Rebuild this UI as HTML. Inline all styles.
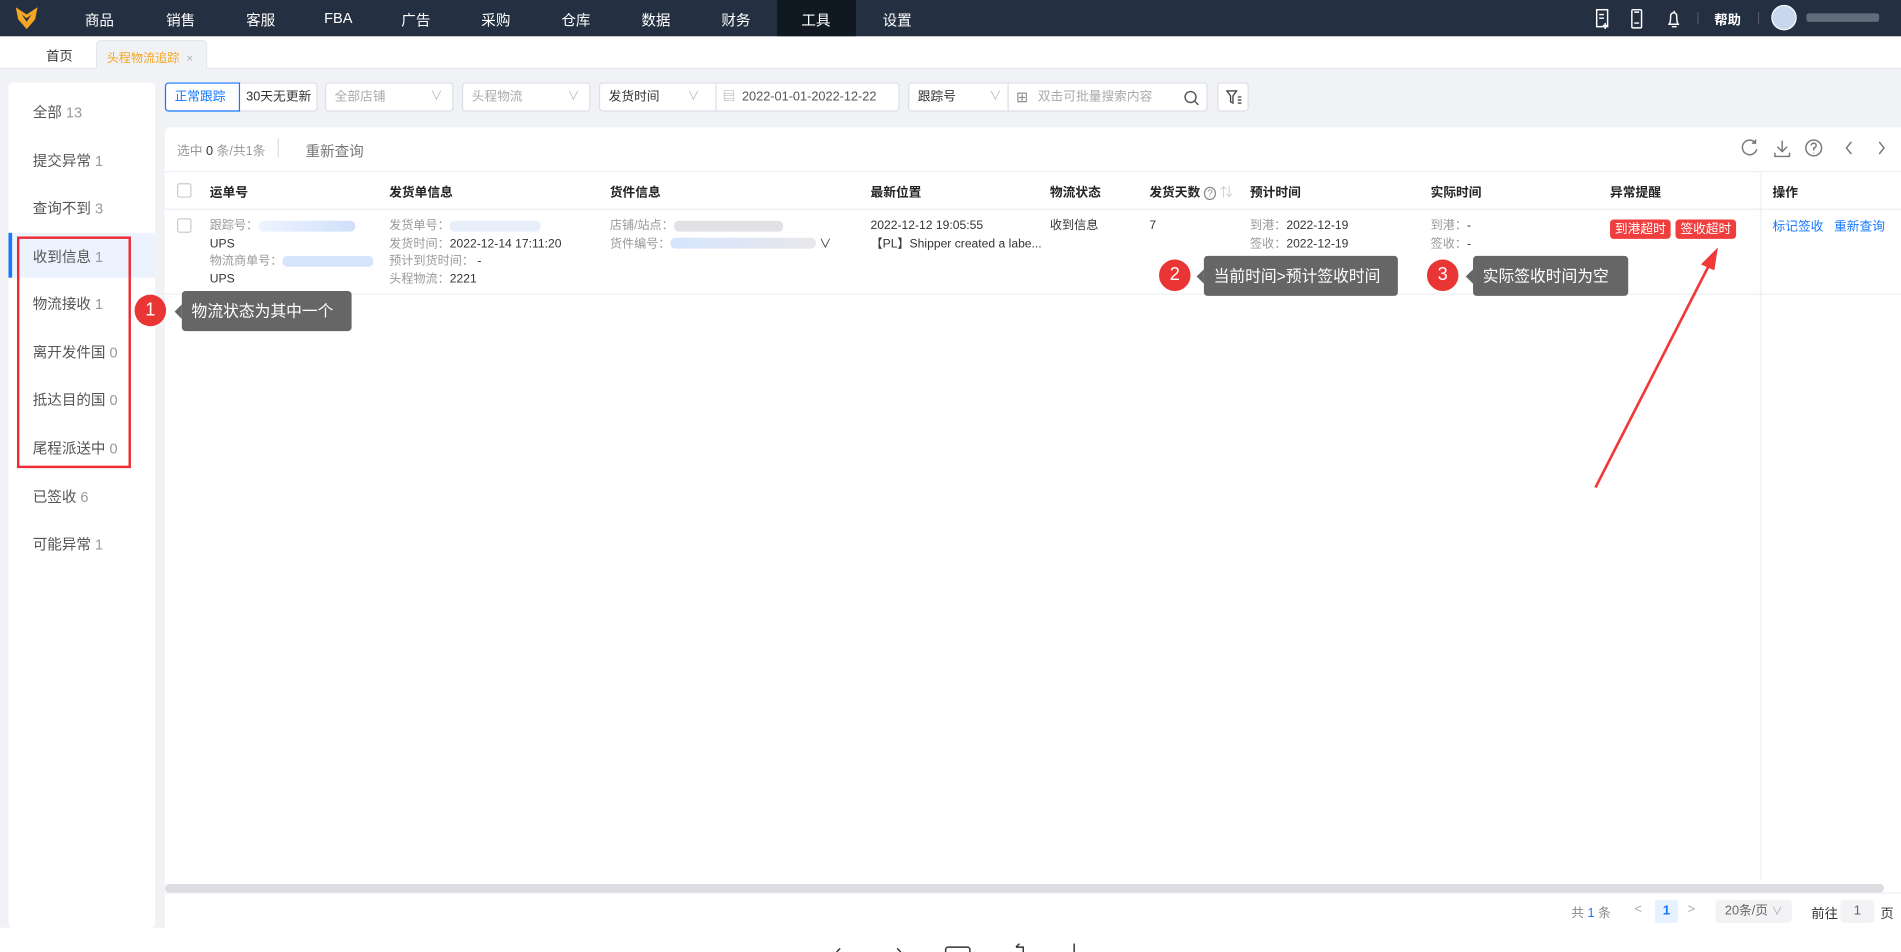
<!DOCTYPE html>
<html><head><meta charset="utf-8">
<style>
html,body{margin:0;padding:0;width:1901px;height:952px;overflow:hidden;background:#fff;}
#s{position:absolute;left:0;top:0;width:1568px;height:785px;transform:scale(1.21237,1.2127);transform-origin:0 0;font-family:"Liberation Sans","Noto Sans CJK SC",sans-serif;font-size:11px;color:#333;}
.a{position:absolute;white-space:nowrap;}
.nav{left:0;top:0;width:1568px;height:30px;background:#243041;}
.nv{top:8px;color:#fff;font-size:12px;transform:translateX(-50%);}
.sel{position:absolute;top:68px;height:24px;border:1px solid #dcdfe6;border-radius:3px;background:#fff;box-sizing:border-box;color:#aaa;line-height:22px;padding-left:7px;font-size:10.5px;}
.chev{position:absolute;right:8px;top:0;color:#bbb;font-size:10px;}
.si{left:27px;font-size:12px;color:#555;}
.si span{color:#999;}
.g{color:#999;}
.blur{display:inline-block;height:9px;border-radius:4px;vertical-align:middle;}
.tip{background:#666;color:#fff;font-size:13px;border-radius:3px;line-height:33px;padding-left:8px;box-sizing:border-box;height:33px;}
.tip:before{content:"";position:absolute;left:-6px;top:11px;border:6px solid transparent;border-left:0;border-right-color:#666;}
.num{width:26px;height:26px;border-radius:50%;background:#ea3535;color:#fff;font-size:15px;text-align:center;line-height:26px;}
.tag{background:#f03d3d;color:#fff;border-radius:3px;font-size:10.5px;line-height:16px;padding:0 4px;}
.h{font-weight:bold;color:#222;top:151px;font-size:10.5px;}
.r{font-size:10px;line-height:14.5px;top:180px;}
</style></head><body><div id="s">
<div class="a nav"></div>
<svg class="a" style="left:11px;top:4px" width="22" height="22" viewBox="0 0 22 22"><path d="M2 2 L11 8 L20 2 L18 12 L11 20 L4 12 Z" fill="#f5a623"/><path d="M7 8 L11 14 L15 8 L11 11Z" fill="#243041"/></svg>
<div class="a" style="left:641px;top:0;width:65px;height:30px;background:#101822"></div>
<div class="a nv" style="left:82px">商品</div><div class="a nv" style="left:149px">销售</div><div class="a nv" style="left:215px">客服</div><div class="a nv" style="left:279px">FBA</div><div class="a nv" style="left:343px">广告</div><div class="a nv" style="left:409px">采购</div><div class="a nv" style="left:475px">仓库</div><div class="a nv" style="left:541px">数据</div><div class="a nv" style="left:607px">财务</div><div class="a nv" style="left:673px">工具</div><div class="a nv" style="left:740px">设置</div>
<svg class="a" style="left:1315px;top:7px" width="80" height="17" viewBox="0 0 80 17" fill="none" stroke="#fff" stroke-width="1.2"><rect x="2" y="1" width="9" height="14"/><path d="M4 5h4M4 8h4M9 12v5M7 14h4"/><rect x="31" y="1" width="8" height="15" rx="1"/><path d="M33 3h4M33 12h4"/><path d="M61 13h9M62 13c1-2 1-4 1-7a2.5 2.5 0 0 1 5 0c0 3 0 5 1 7M66 2v1M64 15h4"/></svg>
<div class="a" style="left:1400px;top:10px;width:1px;height:10px;background:#556"></div>
<div class="a" style="left:1414px;top:8px;color:#fff;font-size:11px;font-weight:bold">帮助</div>
<div class="a" style="left:1450px;top:10px;width:1px;height:10px;background:#556"></div>
<div class="a" style="left:1461px;top:4px;width:21px;height:21px;border-radius:50%;background:#c8d7ee;border:1px solid #fff;box-sizing:border-box"></div>
<div class="a" style="left:1490px;top:11px;width:60px;height:7px;background:#8a92a0;opacity:.6;border-radius:2px"></div>
<div class="a" style="left:0;top:30px;width:1568px;height:27px;background:#fff;border-bottom:1px solid #e4e6ea;box-sizing:border-box"></div>
<div class="a" style="left:38px;top:38px;font-size:11px;color:#333">首页</div>
<div class="a" style="left:79px;top:33px;width:92px;height:24px;background:#f0f2f5;border:1px solid #e4e6ea;border-bottom:0;border-radius:4px 4px 0 0;box-sizing:border-box"></div>
<div class="a" style="left:88px;top:39px;font-size:10px;color:#f5a623">头程物流追踪 <span style="color:#aaa;font-size:9px;margin-left:3px">×</span></div>
<div class="a" style="left:0;top:57px;width:1568px;height:708px;background:#f0f2f5"></div>
<div class="a" style="left:7px;top:68px;width:121px;height:697px;background:#fff;border-radius:4px"></div>
<div class="a" style="left:7px;top:192px;width:121px;height:37px;background:#ecf3fe"></div>
<div class="a" style="left:7px;top:192px;width:3px;height:37px;background:#1677ff"></div>
<div class="a si" style="top:84px">全部 <span>13</span></div>
<div class="a si" style="top:124px">提交异常 <span>1</span></div>
<div class="a si" style="top:163px">查询不到 <span>3</span></div>
<div class="a si" style="top:203px">收到信息 <span>1</span></div>
<div class="a si" style="top:242px">物流接收 <span>1</span></div>
<div class="a si" style="top:282px">离开发件国 <span>0</span></div>
<div class="a si" style="top:321px">抵达目的国 <span>0</span></div>
<div class="a si" style="top:361px">尾程派送中 <span>0</span></div>
<div class="a si" style="top:401px">已签收 <span>6</span></div>
<div class="a si" style="top:440px">可能异常 <span>1</span></div>
<div class="a" style="left:14px;top:195px;width:94px;height:191px;border:2px solid #ee2b33;box-sizing:border-box"></div>
<div class="sel" style="left:136px;width:62px;border-color:#1677ff;color:#1677ff;border-radius:3px 0 0 3px;z-index:2">正常跟踪</div>
<div class="sel" style="left:197px;width:65px;color:#333;border-radius:0 3px 3px 0;padding-left:5px">30天无更新</div>
<div class="sel" style="left:268px;width:106px">全部店铺<span class="chev">∨</span></div>
<div class="sel" style="left:381px;width:106px">头程物流<span class="chev">∨</span></div>
<div class="sel" style="left:494px;width:248px;color:#333">发货时间<span style="position:absolute;left:72px;color:#bbb;font-size:10px">∨</span><span style="position:absolute;left:95px;top:0;width:1px;height:22px;background:#dcdfe6"></span><span style="position:absolute;left:101px;color:#aaa">▤</span><span style="position:absolute;left:117px;color:#555">2022-01-01-2022-12-22</span></div>
<div class="sel" style="left:749px;width:247px;color:#333">跟踪号<span style="position:absolute;left:66px;color:#bbb;font-size:10px">∨</span><span style="position:absolute;left:81px;top:0;width:1px;height:22px;background:#dcdfe6"></span><span style="position:absolute;left:88px;color:#888;font-size:12px">⊞</span><span style="position:absolute;left:106px;color:#aaa">双击可批量搜索内容</span>
<svg style="position:absolute;left:226px;top:5px" width="13" height="13" viewBox="0 0 13 13" fill="none" stroke="#555" stroke-width="1.2"><circle cx="6" cy="6" r="4.5"/><path d="M9.5 9.5l3 3"/></svg></div>
<div class="sel" style="left:1004px;width:26px;padding:0"><svg style="position:absolute;left:6px;top:5px" width="13" height="13" viewBox="0 0 13 13" fill="none" stroke="#444" stroke-width="1.1"><path d="M1 1h8l-3 4v6l-2-1V5z M10 6h3M10 8.5h3M10 11h3"/></svg></div>
<div class="a" style="left:136px;top:105px;width:1432px;height:660px;background:#fff;border-radius:4px 0 0 0"></div>
<div class="a g" style="left:146px;top:117px;font-size:10.5px">选中 <b style="color:#333;font-weight:normal">0</b> 条/共1条</div>
<div class="a" style="left:229px;top:114px;width:1px;height:16px;background:#ddd"></div>
<div class="a" style="left:252px;top:116px;font-size:12px;color:#777">重新查询</div>
<svg class="a" style="left:1436px;top:114px" width="125" height="16" viewBox="0 0 125 16" fill="none" stroke="#777" stroke-width="1.2"><path d="M12 4A6 6 0 1 0 13 9M12 1v3h-3"/><path d="M34 2v9M30 7l4 4 4-4M28 12v3h12v-3"/><circle cx="60" cy="8" r="6.5"/><path d="M58 6a2 2 0 1 1 2 2v2M60 12v.5"/><path d="M91 3l-4 5 4 5M114 3l4 5-4 5"/></svg>
<div class="a" style="left:136px;top:141px;width:1432px;height:1px;background:#ebeef2"></div>
<div class="a" style="left:136px;top:172px;width:1432px;height:1px;background:#ebeef2"></div>
<div class="a" style="left:136px;top:242px;width:1432px;height:1px;background:#ebeef2"></div>
<div class="a" style="left:1452px;top:141px;width:1px;height:584px;background:#ebeef2;box-shadow:-3px 0 6px rgba(0,0,0,.06)"></div>
<div class="a" style="left:146px;top:151px;width:10px;height:10px;border:1px solid #ccc;border-radius:2px"></div>
<div class="a" style="left:146px;top:180px;width:10px;height:10px;border:1px solid #ccc;border-radius:2px"></div>
<div class="a h" style="left:173px">运单号</div>
<div class="a h" style="left:321px">发货单信息</div>
<div class="a h" style="left:503px">货件信息</div>
<div class="a h" style="left:718px">最新位置</div>
<div class="a h" style="left:866px">物流状态</div>
<div class="a h" style="left:948px">发货天数 <span style="font-weight:normal;color:#888;border:1px solid #888;border-radius:50%;font-size:8px;padding:0 2px">?</span> <span style="color:#ccc;font-weight:normal">⇅</span></div>
<div class="a h" style="left:1031px">预计时间</div>
<div class="a h" style="left:1180px">实际时间</div>
<div class="a h" style="left:1328px">异常提醒</div>
<div class="a h" style="left:1462px">操作</div>
<div class="a r" style="left:173px"><span class="g">跟踪号：</span><span class="blur" style="width:80px;background:linear-gradient(90deg,#eef4ff,#cfe0fb)"></span><br>UPS<br><span class="g">物流商单号：</span><span class="blur" style="width:75px;background:#d6e5fc"></span><br>UPS</div>
<div class="a r" style="left:321px"><span class="g">发货单号：</span><span class="blur" style="width:75px;background:#e8eefa"></span><br><span class="g">发货时间：</span>2022-12-14 17:11:20<br><span class="g">预计到货时间：</span> -<br><span class="g">头程物流：</span>2221</div>
<div class="a r" style="left:503px"><span class="g">店铺/站点：</span><span class="blur" style="width:90px;background:#e2e2e6"></span><br><span class="g">货件编号：</span><span class="blur" style="width:120px;background:linear-gradient(90deg,#d6e5fc,#e8e8ec)"></span> ∨</div>
<div class="a r" style="left:718px">2022-12-12 19:05:55<br>【PL】Shipper created a labe...</div>
<div class="a r" style="left:866px">收到信息</div>
<div class="a r" style="left:948px">7</div>
<div class="a r" style="left:1031px"><span class="g">到港：</span>2022-12-19<br><span class="g">签收：</span>2022-12-19</div>
<div class="a r" style="left:1180px"><span class="g">到港：</span>-<br><span class="g">签收：</span>-</div>
<div class="a tag" style="left:1328px;top:181px">到港超时</div>
<div class="a tag" style="left:1382px;top:181px">签收超时</div>
<div class="a" style="left:1462px;top:179px;color:#1677ff;font-size:10.5px">标记签收 &nbsp; 重新查询</div>
<div class="a num" style="left:111px;top:243px">1</div>
<div class="a tip" style="left:150px;top:240px;width:140px">物流状态为其中一个</div>
<div class="a num" style="left:956px;top:214px">2</div>
<div class="a tip" style="left:993px;top:211px;width:160px">当前时间&gt;预计签收时间</div>
<div class="a num" style="left:1177px;top:214px">3</div>
<div class="a tip" style="left:1215px;top:211px;width:128px">实际签收时间为空</div>
<svg class="a" style="left:0;top:0" width="1568" height="785"><path d="M1316 402 L1410 218" stroke="#f03a3a" stroke-width="2.2"/><path d="M1417 204 L1403 218 L1414 223Z" fill="#f03a3a"/></svg>
<div class="a" style="left:136px;top:729px;width:1418px;height:7px;background:#dcdde0;border-radius:4px"></div>
<div class="a" style="left:136px;top:736px;width:1432px;height:1px;background:#ebeef2"></div>
<div class="a" style="left:1296px;top:745px;color:#888;font-size:10.5px">共 <span style="color:#1677ff">1</span> 条</div>
<div class="a" style="left:1348px;top:744px;color:#aaa">&lt;</div>
<div class="a" style="left:1365px;top:742px;width:19px;height:19px;background:#e6f2ff;color:#1677ff;text-align:center;line-height:19px;font-weight:bold">1</div>
<div class="a" style="left:1392px;top:744px;color:#aaa">&gt;</div>
<div class="a" style="left:1415px;top:742px;width:63px;height:19px;background:#f3f3f5;border-radius:3px;color:#666;line-height:19px;text-align:center;font-size:10.5px">20条/页 <span style="color:#aaa;font-size:9px">∨</span></div>
<div class="a" style="left:1494px;top:745px">前往</div>
<div class="a" style="left:1518px;top:742px;width:28px;height:19px;background:#f3f3f5;border-radius:3px;text-align:center;line-height:19px;color:#666">1</div>
<div class="a" style="left:1551px;top:745px">页</div>
<svg class="a" style="left:680px;top:778px" width="220" height="7" fill="none" stroke="#333" stroke-width="1.2"><path d="M10 7l3-3M60 4l3 3"/><rect x="100" y="3" width="20" height="8" rx="2"/><path d="M158 3l3-3M158 3h6v5"/><path d="M206 0v9"/></svg>
</div></body></html>
